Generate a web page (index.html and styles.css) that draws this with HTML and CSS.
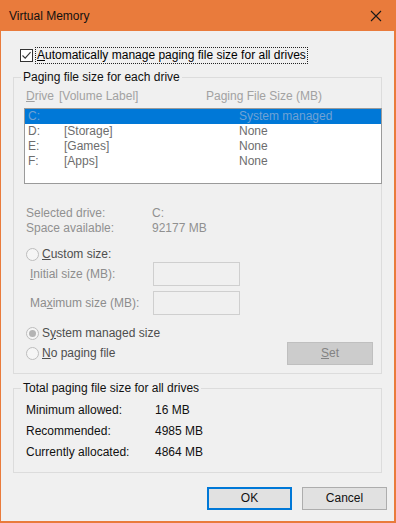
FILE: index.html
```html
<!DOCTYPE html>
<html>
<head>
<meta charset="utf-8">
<link rel="stylesheet" href="styles.css">
</head>
<body>
<div class="window">
  <div class="titlebar">
    <span class="title">Virtual Memory</span>
    <span class="close"><svg width="12" height="12" viewBox="0 0 12 12"><path d="M1 1L11 11M11 1L1 11" stroke="#1a1a1a" stroke-width="1.1" fill="none"/></svg></span>
  </div>
  <div class="body">
    <div class="auto-row">
      <span class="checkbox"><svg width="11" height="11" viewBox="0 0 11 11"><path d="M1.5 5.5L4.2 8.2L9.6 2.2" stroke="#333" stroke-width="1.1" fill="none"/></svg></span>
      <span class="focus"><u>A</u>utomatically manage paging file size for all drives</span>
    </div>

    <div class="group g1">
      <div class="group-title">Paging file size for each drive</div>
      <div class="list-head">
        <span class="h-drive"><u>D</u>rive</span><span class="h-label">[Volume Label]</span><span class="h-size">Paging File Size (MB)</span>
      </div>
      <div class="listbox">
        <div class="row sel"><span class="c-drive">C:</span><span class="c-label"></span><span class="c-size">System managed</span></div>
        <div class="row"><span class="c-drive">D:</span><span class="c-label">[Storage]</span><span class="c-size">None</span></div>
        <div class="row"><span class="c-drive">E:</span><span class="c-label">[Games]</span><span class="c-size">None</span></div>
        <div class="row"><span class="c-drive">F:</span><span class="c-label">[Apps]</span><span class="c-size">None</span></div>
      </div>
      <div class="info">
        <div class="info-row"><span class="i-label">Selected drive:</span><span>C:</span></div>
        <div class="info-row"><span class="i-label">Space available:</span><span>92177 MB</span></div>
      </div>
      <div class="radio-row custom"><span class="radio"></span><span class="r-text"><u>C</u>ustom size:</span></div>
      <div class="size-row first"><span class="s-label"><u>I</u>nitial size (MB):</span><span class="input"></span></div>
      <div class="size-row"><span class="s-label">Ma<u>x</u>imum size (MB):</span><span class="input"></span></div>
      <div class="radio-row system"><span class="radio checked"><span class="dot"></span></span><span class="r-text">S<u>y</u>stem managed size</span></div>
      <div class="last-row">
        <div class="radio-row nopage"><span class="radio"></span><span class="r-text"><u>N</u>o paging file</span></div>
        <span class="set-btn"><u>S</u>et</span>
      </div>
    </div>

    <div class="group g2">
      <div class="group-title">Total paging file size for all drives</div>
      <div class="totals">
        <div class="t-row"><span class="t-label">Minimum allowed:</span><span>16 MB</span></div>
        <div class="t-row"><span class="t-label">Recommended:</span><span>4985 MB</span></div>
        <div class="t-row"><span class="t-label">Currently allocated:</span><span>4864 MB</span></div>
      </div>
    </div>

    <div class="buttons">
      <span class="btn ok">OK</span>
      <span class="btn">Cancel</span>
    </div>
  </div>
</div>
</body>
</html>
```

FILE: styles.css
```css
* { box-sizing: border-box; }
html, body { margin: 0; padding: 0; }
body {
  font-family: "Liberation Sans", Arial, sans-serif;
  font-size: 12px;
  line-height: 15px;
  color: #000;
  background: #f0f0f0;
}
u { text-decoration: underline; text-underline-offset: 1px; }

.window {
  width: 396px;
  height: 523px;
  background: #f0f0f0;
  border-left: 1px solid #e97b3c;
  border-right: 2px solid #e97b3c;
  border-bottom: 2px solid #e97b3c;
  display: flex;
  flex-direction: column;
}
.titlebar {
  height: 31px;
  background: #e97b3c;
  display: flex;
  align-items: center;
  justify-content: space-between;
  padding: 1px 9px 0 8px;
  flex: none;
}
.title { color: #111; font-size: 12px; }
.close { display: flex; width: 12px; height: 12px; margin-right: 3px; }

.body { display: flex; flex-direction: column; }

.auto-row {
  display: flex;
  align-items: center;
  margin: 17px 0 0 19px;
  height: 15px;
}
.checkbox {
  width: 13px;
  height: 13px;
  border: 1px solid #333;
  background: #fff;
  display: flex;
  align-items: center;
  justify-content: center;
}
.focus {
  margin-left: 3px;
  padding: 0 1px;
  outline: 1px dotted #222;
  outline-offset: 0;
  line-height: 15px;
}

.group {
  margin: 14px 12px 0 12px;
  border: 1px solid #dcdcdc;
  display: flex;
  flex-direction: column;
}
.g1 { margin-top: 14px; padding-bottom: 8px; }
.g2 { margin-top: 14px; padding-bottom: 9px; }
.group-title {
  align-self: flex-start;
  margin: -8px 0 0 7px;
  padding: 0 2px;
  background: #f0f0f0;
  line-height: 15px;
  color: #111;
}

.list-head {
  display: flex;
  margin-top: 4px;
  padding-left: 12px;
  color: #a2a2a2;
}
.h-drive { width: 33px; }
.h-label { width: 147px; }

.listbox {
  margin: 4px -1px 0 10px;
  height: 76px;
  border: 1px solid #9a9a9a;
  background: #fff;
  color: #6d6d6d;
}
.row { display: flex; height: 15px; line-height: 15px; padding-left: 3px; }
.row.sel { background: #0078d7; color: #6fa2d4; }
.c-drive { width: 36px; }
.c-label { width: 175px; }

.info { margin-top: 22px; color: #909090; }
.info-row { display: flex; padding-left: 12px; }
.i-label { width: 126px; }

.radio-row { display: flex; align-items: center; padding-left: 12px; height: 15px; }
.custom { margin-top: 11px; }
.system { margin-top: 11px; }
.radio {
  width: 13px;
  height: 13px;
  border-radius: 50%;
  border: 1px solid #bdbdbd;
  background: #f5f5f5;
  display: flex;
  align-items: center;
  justify-content: center;
}
.dot { width: 7px; height: 7px; border-radius: 50%; background: #b4b4b4; }
.r-text { margin-left: 3px; color: #4e4e4e; }

.size-row { display: flex; align-items: center; padding-left: 16px; color: #8d8d8d; }
.size-row + .size-row { margin-top: 5px; }
.s-label { width: 123px; }
.input {
  width: 87px;
  height: 24px;
  border: 1px solid #cfcfcf;
  background: #f0f0f0;
}

.last-row {
  display: flex;
  align-items: center;
  justify-content: space-between;
  margin-top: 1px;
  padding-right: 8px;
}
.nopage { padding-left: 12px; }
.set-btn {
  width: 86px;
  height: 23px;
  background: #cccccc;
  border: 1px solid #bfbfbf;
  color: #838383;
  display: flex;
  align-items: center;
  justify-content: center;
}

.totals { margin-top: 4px; }
.t-row { display: flex; padding-left: 12px; line-height: 21px; height: 21px; color: #111; }
.t-label { width: 129px; }

.buttons {
  display: flex;
  justify-content: flex-end;
  gap: 10px;
  margin: 14px 7px 0 0;
}
.btn {
  width: 85px;
  height: 23px;
  background: #e1e1e1;
  border: 1px solid #adadad;
  display: flex;
  align-items: center;
  justify-content: center;
  color: #111;
}
.btn.ok { border: 2px solid #0078d7; }
```
